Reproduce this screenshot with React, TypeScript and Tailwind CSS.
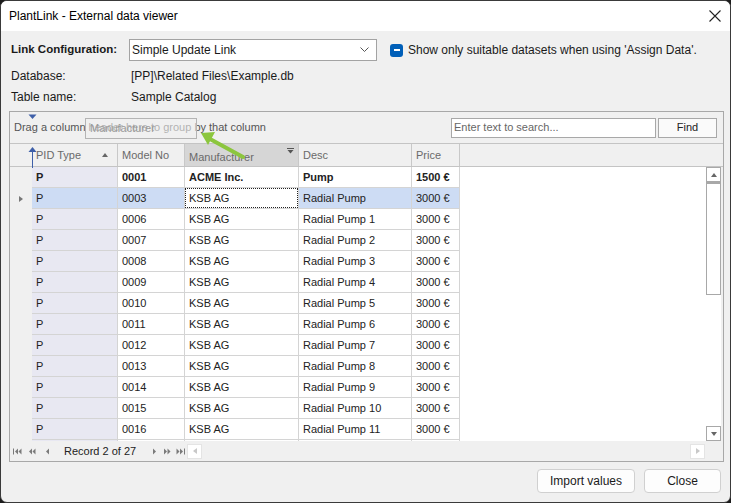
import React from "react";

// Visor de datos externos (PlantLink)
const filas = [
  { pid: "P", model: "0001", man: "ACME Inc.", desc: "Pump", price: "1500 €", bold: true, sel: false },
  { pid: "P", model: "0003", man: "KSB AG", desc: "Radial Pump", price: "3000 €", bold: false, sel: true },
  ...Array.from({ length: 11 }, (_, i) => ({
    pid: "P",
    model: String(6 + i).padStart(4, "0"),
    man: "KSB AG",
    desc: `Radial Pump ${i + 1}`,
    price: "3000 €",
    bold: false,
    sel: false,
  })),
  // fila parcialmente visible al pie
  { pid: "", model: "", man: "", desc: "", price: "", bold: false, sel: false },
];

function Tri({ dir, className = "" }: { dir: "l" | "r" | "u" | "d"; className?: string }) {
  const pts = {
    l: "5,0 5,6 1,3",
    r: "1,0 1,6 5,3",
    u: "0,5 6,5 3,1",
    d: "0,1 6,1 3,5",
  }[dir];
  return (
    <svg width="6" height="6" viewBox="0 0 6 6" className={className}>
      <polygon points={pts} fill="currentColor" />
    </svg>
  );
}

function NavIcon({ kind }: { kind: "first" | "pprev" | "prev" | "next" | "nnext" | "last" }) {
  return (
    <svg width="9" height="7" viewBox="0 0 9 7" className="text-[#7a7a7a]">
      {kind === "first" && (
        <>
          <rect x="0" y="0.5" width="1" height="6" fill="currentColor" />
          <polygon points="5,0.5 5,6.5 2,3.5" fill="currentColor" />
          <polygon points="8.5,0.5 8.5,6.5 5.5,3.5" fill="currentColor" />
        </>
      )}
      {kind === "pprev" && (
        <>
          <polygon points="4,0.5 4,6.5 1,3.5" fill="currentColor" />
          <polygon points="7.5,0.5 7.5,6.5 4.5,3.5" fill="currentColor" />
        </>
      )}
      {kind === "prev" && <polygon points="6,0.5 6,6.5 3,3.5" fill="currentColor" />}
      {kind === "next" && <polygon points="3,0.5 3,6.5 6,3.5" fill="currentColor" />}
      {kind === "nnext" && (
        <>
          <polygon points="1,0.5 1,6.5 4,3.5" fill="currentColor" />
          <polygon points="4.5,0.5 4.5,6.5 7.5,3.5" fill="currentColor" />
        </>
      )}
      {kind === "last" && (
        <>
          <polygon points="0.5,0.5 0.5,6.5 3.5,3.5" fill="currentColor" />
          <polygon points="4,0.5 4,6.5 7,3.5" fill="currentColor" />
          <rect x="8" y="0.5" width="1" height="6" fill="currentColor" />
        </>
      )}
    </svg>
  );
}

export default function App() {
  return (
    <div className="w-[731px] h-[503px] bg-[#1c1c1c] font-['Liberation_Sans',Arial,sans-serif] text-[#1a1a1a]">
      <div className="w-full h-full rounded-[7px] border border-[#3a3a3a] overflow-hidden bg-[#f0f0f0] flex flex-col">
        {/* Barra de título */}
        <div className="h-[30px] bg-white flex items-center justify-between pl-[8px] pr-[9px] shrink-0">
          <span className="text-[12px] text-black">PlantLink - External data viewer</span>
          <svg width="12" height="12" viewBox="0 0 12 12">
            <path d="M0.5 0.5 L11.5 11.5 M11.5 0.5 L0.5 11.5" stroke="#222" strokeWidth="1.1" />
          </svg>
        </div>

        {/* Configuración */}
        <div className="pl-[10px] pr-[8px] pt-[8px] text-[12px]">
          <div className="flex items-center h-[22px]">
            <span className="w-[118px] font-bold text-[11.5px]">Link Configuration:</span>
            <div className="w-[248px] h-[22px] bg-white border border-[#a3a3a3] flex items-center justify-between pl-[2px] pr-[7px]">
              <span>Simple Update Link</span>
              <svg width="9" height="6" viewBox="0 0 9 6">
                <path d="M0.5 0.5 L4.5 4.5 L8.5 0.5" stroke="#555" fill="none" strokeWidth="1" />
              </svg>
            </div>
            <div className="ml-[13px] w-[13px] h-[13px] rounded-[3px] bg-[#005fb8] flex items-center justify-center">
              <div className="w-[6px] h-[2px] bg-white" />
            </div>
            <span className="ml-[5px]">Show only suitable datasets when using 'Assign Data'.</span>
          </div>
          <div className="flex items-center h-[21px] mt-[4px]">
            <span className="w-[120px]">Database:</span>
            <span>[PP]\Related Files\Example.db</span>
          </div>
          <div className="flex items-center h-[21px]">
            <span className="w-[120px]">Table name:</span>
            <span>Sample Catalog</span>
          </div>
        </div>

        {/* Rejilla */}
        <div className="relative ml-[8px] mt-[4px] w-[715px] h-[351px] border border-[#a8a8a8] flex flex-col text-[11px] shrink-0">
          {/* Panel de agrupación */}
          <div className="h-[32px] flex items-center justify-between pl-[4px] pr-[6px] border-b border-[#c4c4c4] shrink-0">
            <span className="text-[#555]">Drag a column header here to group by that column</span>
            <div className="flex gap-[2px]">
              <div className="w-[205px] h-[20px] bg-white border border-[#a8a8a8] flex items-center pl-[2px] text-[#666]">
                Enter text to search...
              </div>
              <div className="w-[59px] h-[20px] bg-[#fafafa] border border-[#a8a8a8] flex items-center justify-center text-[#222]">
                Find
              </div>
            </div>
          </div>

          {/* Cabecera */}
          <div className="h-[23px] flex border-b border-[#c4c4c4] shrink-0 text-[#6a6a6a]">
            <div className="w-[22px]" />
            <div className="w-[86px] border-r border-[#c8c8c8] flex items-center justify-between pl-[4px] pr-[9px]">
              <span>PID Type</span>
              <Tri dir="u" className="text-[#666]" />
            </div>
            <div className="w-[67px] border-r border-[#c8c8c8] flex items-center pl-[4px]">Model No</div>
            <div className="w-[114px] border-r border-[#c8c8c8] bg-[#d6d6d6] flex items-start justify-between pl-[4px] pr-[4px]">
              <span className="mt-[5px]">Manufacturer</span>
              <svg width="7" height="7" viewBox="0 0 7 7" className="mt-[4px]">
                <rect x="0" y="0" width="7" height="1" fill="#555" />
                <polygon points="0.5,2 6.5,2 3.5,5.5" fill="#555" />
              </svg>
            </div>
            <div className="w-[113px] border-r border-[#c8c8c8] flex items-center pl-[4px]">Desc</div>
            <div className="w-[48px] border-r border-[#c8c8c8] flex items-center pl-[4px]">Price</div>
            <div className="flex-1" />
          </div>

          {/* Datos + barra vertical */}
          <div className="flex h-[274px] shrink-0">
            <div className="flex-1 overflow-hidden bg-white">
              {filas.map((f, i) => {
                const cell = "border-r border-b border-[#d4d4d4] flex items-center pl-[4px]";
                const bg = f.sel ? "bg-[#cddcf4]" : "bg-white";
                return (
                  <div key={i} className={`flex h-[21px] shrink-0 text-[#222] ${f.bold ? "font-bold" : ""}`}>
                    <div className="w-[22px] bg-[#f0f0f0] flex items-center justify-center">
                      {f.sel && <Tri dir="r" className="text-[#777]" />}
                    </div>
                    <div className={`w-[86px] ${cell} ${f.sel ? "bg-[#cddcf4]" : "bg-[#e8e8f2]"}`}>{f.pid}</div>
                    <div className={`w-[67px] ${cell} ${bg}`}>{f.model}</div>
                    <div className={`w-[114px] ${cell} bg-white relative`}>
                      {f.sel && <div className="absolute inset-0 border border-dotted border-[#222]" />}
                      {f.man}
                    </div>
                    <div className={`w-[113px] ${cell} ${bg}`}>{f.desc}</div>
                    <div className={`w-[48px] ${cell} ${bg}`}>{f.price}</div>
                    <div className="flex-1 bg-white" />
                  </div>
                );
              })}
            </div>
            <div className="w-[17px] bg-[#f0f0f0] flex flex-col">
              <div className="w-[15px] bg-white flex flex-col h-full">
                <div className="h-[15px] border border-[#a8a8a8] flex items-center justify-center text-[#666]">
                  <Tri dir="u" />
                </div>
                <div className="h-[113px] border border-t-2 border-[#a8a8a8]" />
                <div className="flex-1" />
                <div className="h-[15px] border border-[#a8a8a8] flex items-center justify-center text-[#666]">
                  <Tri dir="d" />
                </div>
              </div>
            </div>
          </div>

          {/* Navegador */}
          <div className="h-[20px] shrink-0 flex items-center leading-[14px]">
            <div className="flex items-center gap-[6px] pl-[3px]">
              <NavIcon kind="first" />
              <NavIcon kind="pprev" />
              <NavIcon kind="prev" />
            </div>
            <span className="ml-[12px] text-[#222]">Record 2 of 27</span>
            <div className="flex items-center gap-[4px] ml-[14px]">
              <NavIcon kind="next" />
              <NavIcon kind="nnext" />
              <NavIcon kind="last" />
            </div>
            <div className="ml-[2px] w-[15px] h-[15px] bg-white border border-[#e4e4e4] flex items-center justify-center text-[#c8c8c8]">
              <Tri dir="l" />
            </div>
            <div className="flex-1" />
            <div className="mr-[18px] w-[15px] h-[15px] bg-white border border-[#e4e4e4] flex items-center justify-center text-[#c8c8c8]">
              <Tri dir="r" />
            </div>
          </div>

          {/* Fantasma de arrastre */}
          <div className="absolute left-[75px] top-[6px] w-[112px] h-[21px] border border-[#b4b4b4] bg-[#f0f0f0]/60 flex items-center pl-[4px] text-[#9a9a9a]">
            Manufacturer
          </div>
          {/* Indicadores de inserción */}
          <svg className="absolute left-[18px] top-[2px] pointer-events-none" width="9" height="54" viewBox="0 0 9 54">
            <polygon points="0.5,0.5 8.5,0.5 4.5,5" fill="#3e5fa8" />
            <polygon points="0.5,38 8.5,38 4.5,33" fill="#3e5fa8" />
            <rect x="4" y="37" width="1" height="17" fill="#3e5fa8" />
          </svg>
          {/* Flecha verde */}
          <svg className="absolute left-0 top-0 pointer-events-none" width="260" height="60" viewBox="0 0 260 60">
            <line x1="233" y1="45" x2="200" y2="27" stroke="#8cc63e" strokeWidth="4" strokeLinecap="round" />
            <polygon points="191,21 205,20 198,33" fill="#8cc63e" />
          </svg>
        </div>

        {/* Botones */}
        <div className="flex justify-end gap-[9px] pr-[9px] mt-[7px] text-[12px]">
          <div className="w-[98px] h-[24px] rounded-[4px] border border-[#d0d0d0] bg-[#fdfdfd] flex items-center justify-center">
            Import values
          </div>
          <div className="w-[77px] h-[24px] rounded-[4px] border border-[#d0d0d0] bg-[#fdfdfd] flex items-center justify-center">
            Close
          </div>
        </div>
      </div>
    </div>
  );
}
